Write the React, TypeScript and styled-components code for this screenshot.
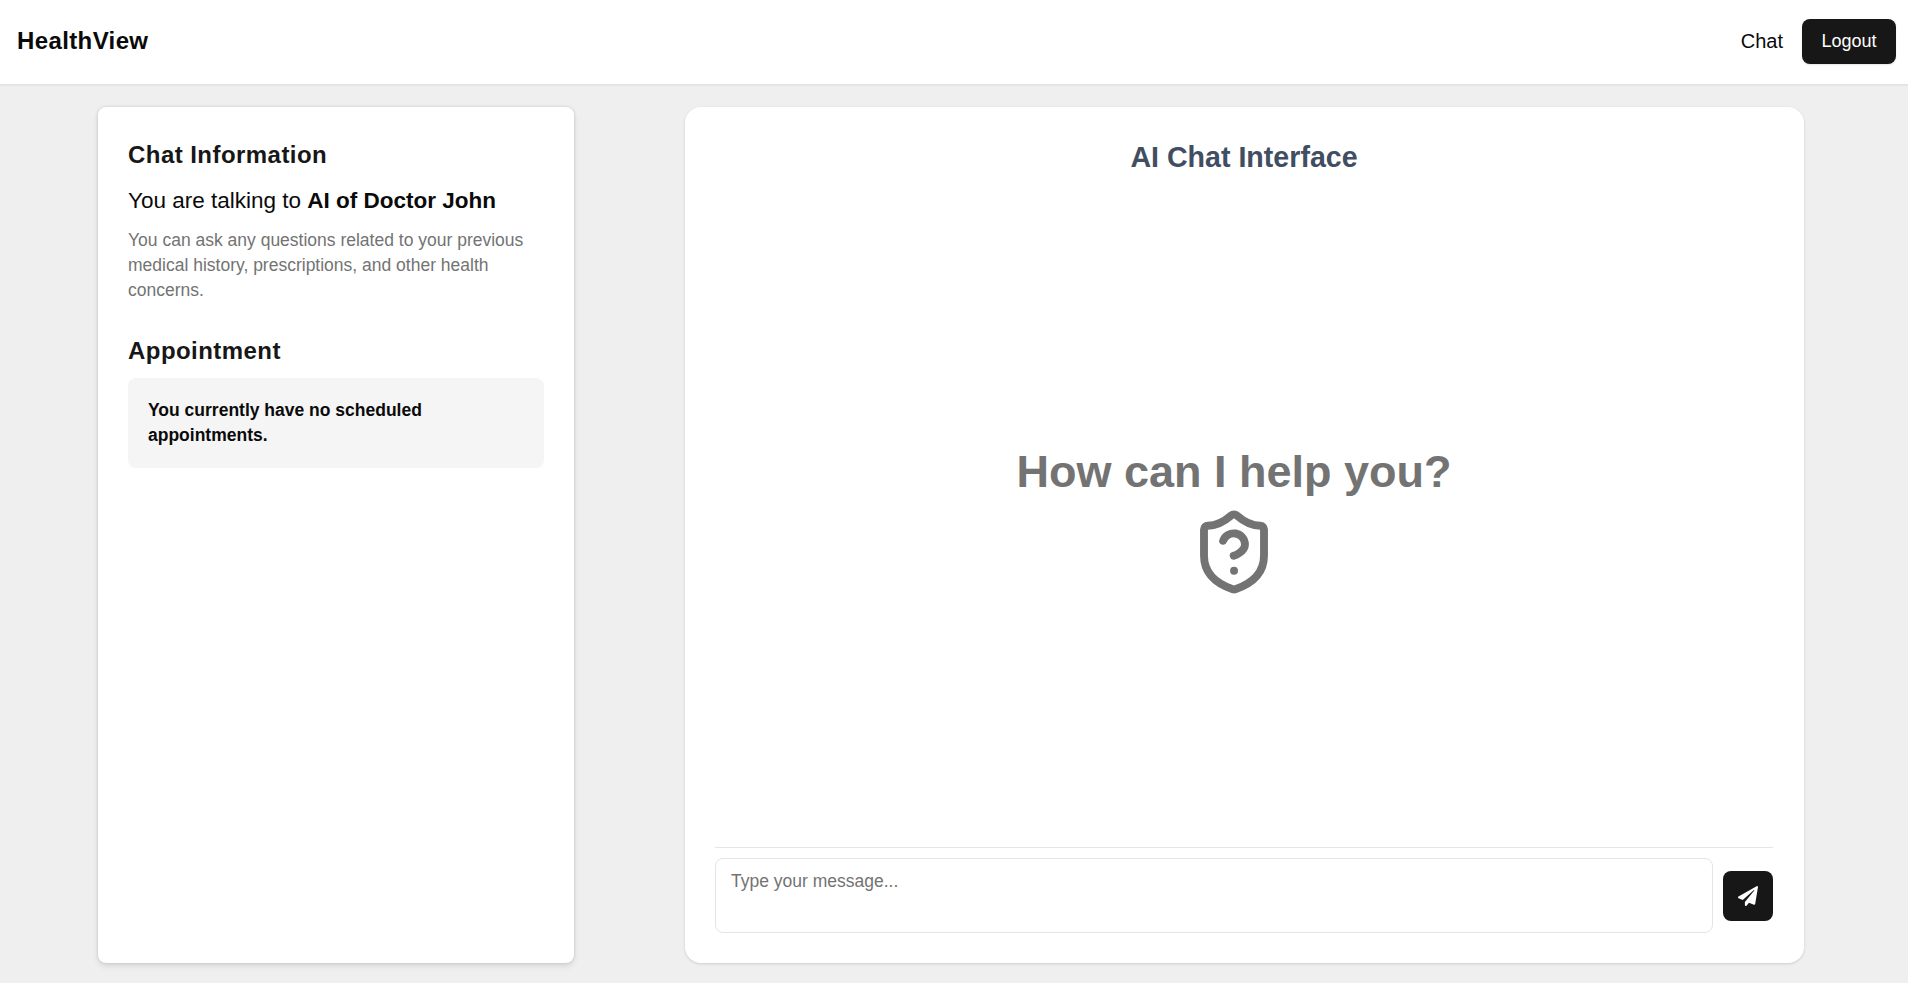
import React from "react";
import styled, { createGlobalStyle } from "styled-components";
import { ShieldQuestion } from "lucide-react";
import { FaPaperPlane } from "react-icons/fa";

const Global = createGlobalStyle`
  html, body { margin: 0; padding: 0; height: 100%; background: #efefef; }
  body { font-family: "Liberation Sans", Arial, sans-serif; overflow: hidden; }
  * { box-sizing: border-box; }
`;

const Page = styled.div`
  height: 983px;
  display: flex;
  flex-direction: column;
`;

const Header = styled.header`
  height: 86px;
  flex: none;
  background: #fff;
  border-bottom: 2px solid #e5e5e5;
  display: flex;
  align-items: center;
  justify-content: space-between;
  padding: 0 12px 1px 17px;
`;

const Brand = styled.div`
  font-size: 24px;
  letter-spacing: 0.38px;
  font-weight: 700;
  color: #0a0a0a;
  margin-top: -2px;
`;

const Nav = styled.nav`
  display: flex;
  align-items: center;
  gap: 19px;
`;

const NavLink = styled.a`
  font-size: 20px;
  color: #0a0a0a;
`;

const LogoutButton = styled.button`
  width: 94px;
  height: 45px;
  border: none;
  border-radius: 8px;
  background: #171717;
  color: #fff;
  font: 400 18px "Liberation Sans", Arial, sans-serif;
  box-shadow: 0 1px 2px rgba(0, 0, 0, 0.1);
`;

const Main = styled.main`
  flex: 1;
  min-height: 0;
  display: flex;
  padding: 21px 104px 20px 98px;
  gap: 111px;
`;

const InfoCard = styled.aside`
  width: 476px;
  flex: none;
  background: #fff;
  border-radius: 8px;
  padding: 32px 30px;
  box-shadow: 0 0 3px rgba(0, 0, 0, 0.14), 0 3px 6px rgba(0, 0, 0, 0.1);
`;

const CardTitle = styled.h2<{ $spaced?: boolean }>`
  margin: ${(p) => (p.$spaced ? "32px" : "0")} 0 0;
  font-size: 24px;
  letter-spacing: 0.45px;
  line-height: 32px;
  font-weight: 700;
  color: #171717;
`;

const Talking = styled.p`
  margin: 16px 0 0;
  font-size: 22.5px;
  line-height: 28px;
  color: #0a0a0a;
  strong { font-weight: 700; }
`;

const Hint = styled.p`
  margin: 13px 0 0;
  font-size: 17.5px;
  line-height: 25px;
  color: #737373;
`;

const NoticeBox = styled.div`
  margin-top: 11px;
  background: #f5f5f5;
  border-radius: 8px;
  padding: 20px;
  font-size: 17.5px;
  line-height: 25px;
  font-weight: 700;
  color: #0a0a0a;
`;

const ChatCard = styled.section`
  flex: 1;
  min-width: 0;
  background: #fff;
  border-radius: 16px;
  padding: 32px 31px 30px 30px;
  display: flex;
  flex-direction: column;
  box-shadow: 0 1px 3px rgba(0, 0, 0, 0.14);
`;

const ChatTitle = styled.h1`
  margin: 0;
  font-size: 28.6px;
  line-height: 36px;
  font-weight: 700;
  color: #414e62;
  text-align: center;
`;

const Messages = styled.div`
  flex: 1;
  min-height: 0;
  display: flex;
  flex-direction: column;
  align-items: center;
  justify-content: center;
  gap: 9px;
  color: #737373;
  padding: 20px 20px 0 0;
`;

const Prompt = styled.div`
  font-size: 45px;
  line-height: 52px;
  font-weight: 700;
`;

const Composer = styled.div`
  flex: none;
  border-top: 1px solid #e5e5e5;
  padding-top: 10px;
  display: flex;
  align-items: center;
  gap: 10px;
`;

const MessageInput = styled.textarea`
  flex: 1;
  height: 75px;
  resize: none;
  border: 1px solid #e5e5e5;
  border-radius: 8px;
  padding: 12px 15px;
  outline: none;
  font: 400 17.5px/21px "Liberation Sans", Arial, sans-serif;
  &::placeholder { color: #737373; opacity: 1; }
`;

const SendButton = styled.button`
  width: 50px;
  height: 50px;
  flex: none;
  border: none;
  border-radius: 8px;
  background: #171717;
  color: #fff;
  display: flex;
  align-items: center;
  justify-content: center;
`;

export default function App() {
  return (
    <Page>
      <Global />
      <Header>
        <Brand>HealthView</Brand>
        <Nav>
          <NavLink>Chat</NavLink>
          <LogoutButton>Logout</LogoutButton>
        </Nav>
      </Header>
      <Main>
        <InfoCard>
          <CardTitle>Chat Information</CardTitle>
          <Talking>
            You are talking to <strong>AI of Doctor John</strong>
          </Talking>
          <Hint>
            You can ask any questions related to your previous medical history, prescriptions, and other health concerns.
          </Hint>
          <CardTitle $spaced>Appointment</CardTitle>
          <NoticeBox>You currently have no scheduled appointments.</NoticeBox>
        </InfoCard>
        <ChatCard>
          <ChatTitle>AI Chat Interface</ChatTitle>
          <Messages>
            <Prompt>How can I help you?</Prompt>
            <ShieldQuestion size={90} strokeWidth={2.1} />
          </Messages>
          <Composer>
            <MessageInput placeholder="Type your message..." />
            <SendButton aria-label="Send">
              <FaPaperPlane size={20} />
            </SendButton>
          </Composer>
        </ChatCard>
      </Main>
    </Page>
  );
}
